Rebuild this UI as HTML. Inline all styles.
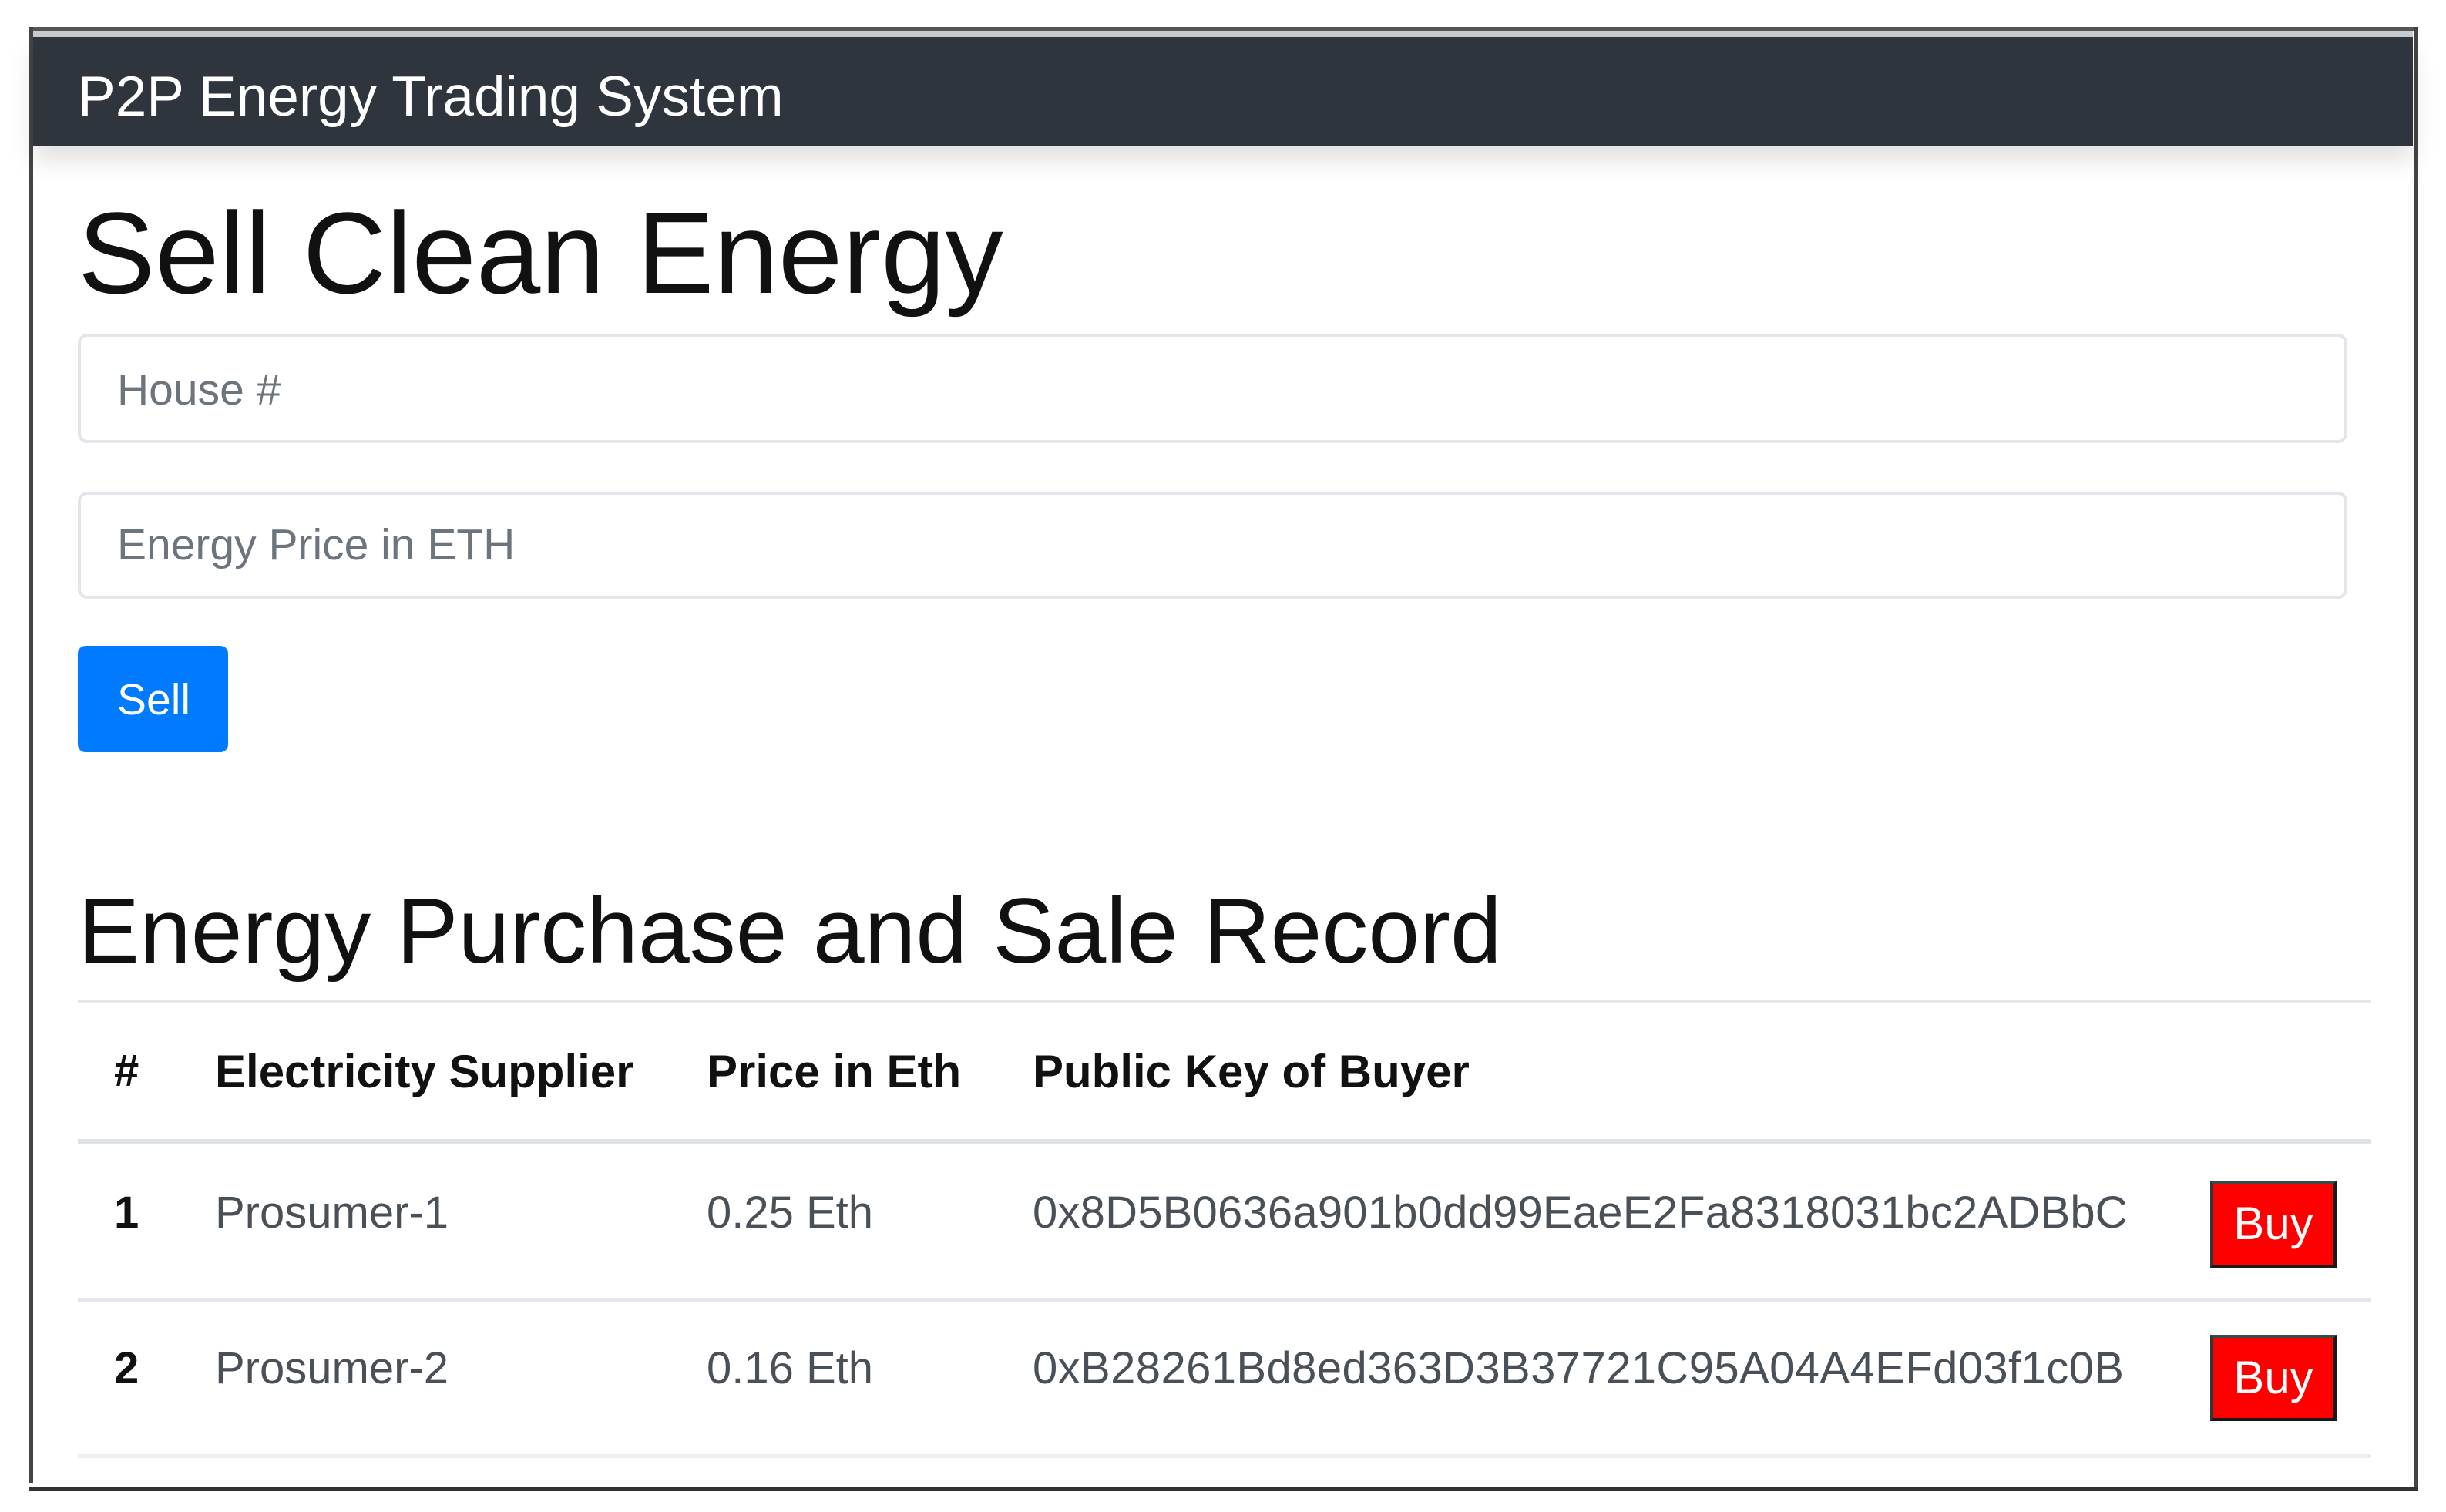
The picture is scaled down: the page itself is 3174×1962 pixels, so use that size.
<!DOCTYPE html>
<html><head><meta charset="utf-8"><style>
*{margin:0;padding:0;box-sizing:border-box}
html,body{width:3174px;height:1962px;background:#fff;overflow:hidden;position:relative;font-family:"Liberation Sans",sans-serif}
.a{position:absolute;white-space:nowrap;line-height:1}
.ln{position:absolute;background:#e3e7eb}
</style></head><body>
<div style="position:absolute;left:38px;top:35px;width:3100px;height:5px;background:#555"></div>
<div style="position:absolute;left:38px;top:35px;width:5px;height:1890px;background:#444"></div>
<div style="position:absolute;left:3133px;top:35px;width:5px;height:1900px;background:#444"></div>
<div style="position:absolute;left:38px;top:1930px;width:3100px;height:5px;background:#333"></div>
<div style="position:absolute;left:43px;top:40px;width:3088px;height:8px;background:#c8ccd0"></div>
<div style="position:absolute;left:43px;top:48px;width:3088px;height:142px;background:#2f353c;box-shadow:0 18px 30px rgba(0,0,0,0.12)"></div>
<div class="a" style="left:101px;top:89px;font-size:73px;color:#fff">P2P Energy Trading System</div>
<div class="a" style="left:101px;top:253px;font-size:150px;color:#111">Sell Clean Energy</div>
<div style="position:absolute;left:101px;top:433px;width:2945px;height:142px;border:4px solid #e2e6ea;border-radius:12px"></div>
<div class="a" style="left:152px;top:478px;font-size:57px;color:#6c757d">House #</div>
<div style="position:absolute;left:101px;top:638px;width:2945px;height:139px;border:4px solid #e2e6ea;border-radius:12px"></div>
<div class="a" style="left:152px;top:679px;font-size:57px;color:#6c757d">Energy Price in ETH</div>
<div style="position:absolute;left:101px;top:838px;width:195px;height:138px;background:#007bff;border-radius:10px"></div>
<div class="a" style="left:152px;top:880px;font-size:57px;color:#fff">Sell</div>
<div class="a" style="left:101px;top:1148px;font-size:120px;color:#111">Energy Purchase and Sale Record</div>
<div class="ln" style="left:101px;top:1297px;width:2976px;height:5px"></div>
<div class="a" style="left:148px;top:1361px;font-size:58px;font-weight:bold;color:#111">#</div>
<div class="a" style="left:279px;top:1361px;font-size:60px;font-weight:bold;color:#111">Electricity Supplier</div>
<div class="a" style="left:917px;top:1361px;font-size:60px;font-weight:bold;color:#111">Price in Eth</div>
<div class="a" style="left:1340px;top:1361px;font-size:60px;font-weight:bold;color:#111">Public Key of Buyer</div>
<div class="ln" style="left:101px;top:1478px;width:2976px;height:7px;background:#dde2e6"></div>
<div class="a" style="left:148px;top:1545px;font-size:58px;font-weight:bold;color:#111">1</div>
<div class="a" style="left:279px;top:1545px;font-size:58px;color:#495057">Prosumer-1</div>
<div class="a" style="left:917px;top:1545px;font-size:58px;color:#495057">0.25 Eth</div>
<div class="a" style="left:1340px;top:1545px;font-size:58px;color:#495057;letter-spacing:0.2px">0x8D5B0636a901b0dd99EaeE2Fa8318031bc2ADBbC</div>
<div style="position:absolute;left:2868px;top:1532px;width:164px;height:113px;background:#f00;border:4px solid #1a1a1a;border-top-color:#3a4a4a;border-left-color:#2a3a3a"></div>
<div class="a" style="left:2868px;top:1558px;width:164px;text-align:center;font-size:60px;color:#fff">Buy</div>
<div class="ln" style="left:101px;top:1684px;width:2976px;height:5px"></div>
<div class="a" style="left:148px;top:1747px;font-size:58px;font-weight:bold;color:#111">2</div>
<div class="a" style="left:279px;top:1747px;font-size:58px;color:#495057">Prosumer-2</div>
<div class="a" style="left:917px;top:1747px;font-size:58px;color:#495057">0.16 Eth</div>
<div class="a" style="left:1340px;top:1747px;font-size:58px;color:#495057;letter-spacing:0.4px">0xB28261Bd8ed363D3B37721C95A04A4EFd03f1c0B</div>
<div style="position:absolute;left:2868px;top:1732px;width:164px;height:112px;background:#f00;border:4px solid #1a1a1a;border-top-color:#3a4a4a;border-left-color:#2a3a3a"></div>
<div class="a" style="left:2868px;top:1758px;width:164px;text-align:center;font-size:60px;color:#fff">Buy</div>
<div class="ln" style="left:101px;top:1887px;width:2976px;height:5px;background:#eceff2"></div>
</body></html>
